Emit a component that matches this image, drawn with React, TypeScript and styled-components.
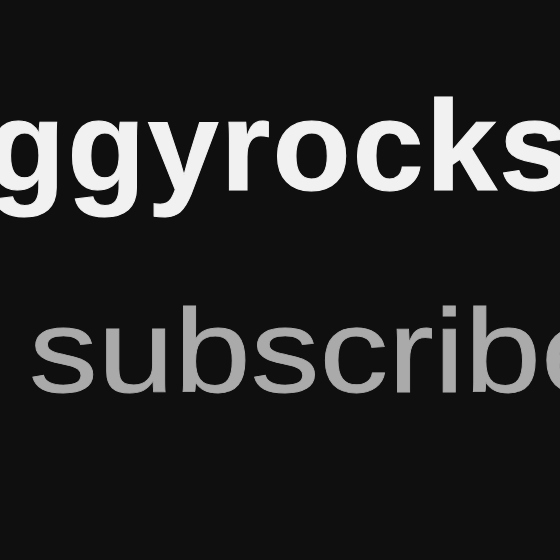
import React from "react";
import styled, { createGlobalStyle } from "styled-components";

const Global = createGlobalStyle`
  html, body { margin: 0; padding: 0; background: #0f0f0f; }
  body { width: 560px; height: 560px; overflow: hidden; }
`;

const Frame = styled.div`
  width: 560px;
  height: 560px;
  overflow: hidden;
  background: #0f0f0f;
  display: flex;
  flex-direction: column;
  align-items: flex-start;
  padding-top: 82px;
  box-sizing: border-box;
  font-family: "Liberation Sans", Arial, sans-serif;
`;

const ChannelName = styled.div`
  font-size: 128px;
  line-height: 1;
  font-weight: 700;
  letter-spacing: 2px;
  color: #f1f1f1;
  -webkit-text-stroke: 1px #f1f1f1;
  white-space: nowrap;
  margin-left: -13px;
`;

const Subscribers = styled.div`
  font-size: 118px;
  line-height: 1;
  font-weight: 400;
  color: #aaaaaa;
  -webkit-text-stroke: 0.8px #aaaaaa;
  white-space: nowrap;
  margin-top: 82px;
  margin-left: 29px;
  transform: scaleX(1.165);
  transform-origin: left center;
`;

export default function App() {
  return (
    <>
      <Global />
      <Frame>
        <ChannelName>ggyrocks</ChannelName>
        <Subscribers>subscribers</Subscribers>
      </Frame>
    </>
  );
}
